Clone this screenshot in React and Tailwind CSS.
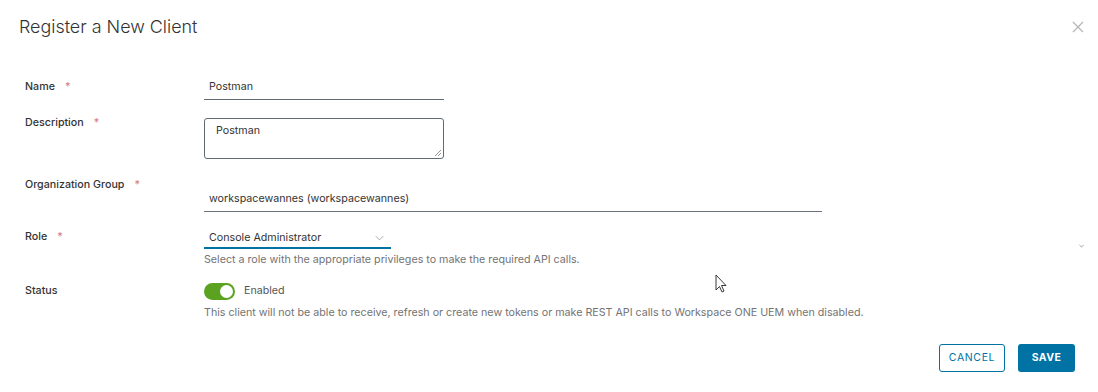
import React from "react";

function Label({ children, required = true }) {
  return (
    <div className="flex w-[179px] shrink-0 items-center text-[10.7px] font-medium leading-4 text-[#333333]">
      <span>{children}</span>
      {required && <span className="ml-[10px] text-[#d88484]">*</span>}
    </div>
  );
}

function Chevron({ className }) {
  return (
    <svg className={className} viewBox="0 0 12 8" fill="none" stroke="currentColor" strokeWidth={1}>
      <path d="M1 1.5l5 5 5-5" />
    </svg>
  );
}

export default function App() {
  return (
    <div
      className="relative h-[392px] w-[1098px] overflow-hidden bg-white"
      style={{ fontFamily: "Inter, Lato, sans-serif" }}
    >
      <header className="flex h-[52px] items-start justify-between pl-[19px] pr-[14px] pt-[15px]">
        <h1 className="text-[17.9px] font-light leading-6 text-[#333333]">Register a New Client</h1>
        <button type="button" className="mt-[6px] text-[#b5b5b5]">
          <svg className="h-[12px] w-[12px]" viewBox="0 0 12 12" stroke="currentColor" strokeWidth={1.2}>
            <path d="M1 1l10 10M11 1L1 11" />
          </svg>
        </button>
      </header>

      <div className="pl-[25px] pt-[23px]">
        {/* Name */}
        <div className="flex items-start">
          <div className="pt-[4px]">
            <Label>Name</Label>
          </div>
          <div className="flex h-[25px] w-[240px] items-center border-b border-[#5f6b72] pl-[5px] text-[10.7px] text-[#333333]">
            Postman
          </div>
        </div>

        {/* Description */}
        <div className="mt-[15px] flex items-start">
          <Label>Description</Label>
          <div className="relative mt-[3px] h-[41px] w-[240px] rounded-[3px] border border-[#5f6b72] pl-[11px] pt-[5px] text-[10.7px] leading-[14px] text-[#333333]">
            Postman
            <svg className="absolute bottom-[2px] right-[2px] h-[7px] w-[7px]" viewBox="0 0 7 7" stroke="#777" strokeWidth={0.8}>
              <path d="M1 7L7 1M4 7L7 4" />
            </svg>
          </div>
        </div>

        {/* Organization Group */}
        <div className="mt-[18px] flex items-start">
          <Label>Organization Group</Label>
          <div className="mt-[10px] flex h-[25px] w-[618px] items-center border-b border-[#6b7280] pl-[5px] text-[10.7px] text-[#333333]">
            workspacewannes (workspacewannes)
          </div>
        </div>

        {/* Role */}
        <div className="mt-[17px] flex items-start">
          <Label>Role</Label>
          <div className="-mt-[1px]">
            <div className="flex h-[21px] w-[187px] items-center justify-between border-b-2 border-[#0072a3] pl-[5px] pr-[6px] pt-[1px] text-[10.7px] text-[#333333]">
              <span>Console Administrator</span>
              <Chevron className="h-[6px] w-[11px] text-[#8c8c8c]" />
            </div>
            <p className="mt-[3px] text-[10.7px] leading-4 text-[#737373]">
              Select a role with the appropriate privileges to make the required API calls.
            </p>
          </div>
        </div>

        {/* Status */}
        <div className="mt-[15px] flex items-start">
          <Label required={false}>Status</Label>
          <div>
            <div className="flex h-4 items-center">
              <div className="flex h-[17px] w-[31px] items-center justify-end rounded-full bg-[#5aa220] pr-[2px]">
                <div className="h-[13px] w-[13px] rounded-full bg-white" />
              </div>
              <span className="ml-[9px] text-[10.7px] text-[#555555]">Enabled</span>
            </div>
            <p className="mt-[6px] text-[10.7px] leading-4 text-[#737373]">
              This client will not be able to receive, refresh or create new tokens or make REST API calls to Workspace ONE UEM when disabled.
            </p>
          </div>
        </div>
      </div>

      <div className="mt-[23px] flex justify-end gap-[13px] pr-[23px]">
        <button
          type="button"
          className="h-[28px] w-[66px] rounded-[3px] border border-[#0072a3] text-[10.5px] tracking-[0.06em] text-[#0072a3]"
        >
          CANCEL
        </button>
        <button
          type="button"
          className="h-[28px] w-[57px] rounded-[3px] bg-[#0072a3] text-[10.5px] font-bold tracking-[0.04em] text-white"
        >
          SAVE
        </button>
      </div>

      {/* small scroll chevron */}
      <Chevron className="absolute left-[1079px] top-[244px] h-[4px] w-[5px] text-[#222]" />

      {/* mouse cursor */}
      <svg className="absolute left-[715px] top-[274px] h-[20px] w-[13px]" viewBox="0 0 13 20">
        <path d="M1 1v15l3.5-3.5 2.5 5.5 2-1-2.5-5.5H11z" fill="white" stroke="#222" strokeWidth={0.9} strokeLinejoin="round" />
      </svg>
    </div>
  );
}
